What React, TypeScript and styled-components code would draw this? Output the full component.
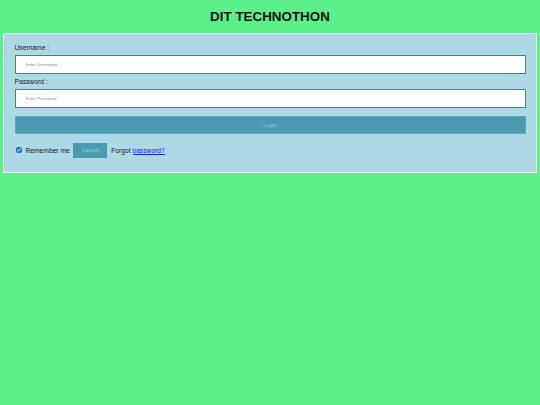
import styled, { createGlobalStyle } from "styled-components";

const GlobalStyle = createGlobalStyle`
  html, body {
    margin: 0;
    padding: 0;
    background: #5cf08b;
    font-family: "Liberation Sans", Arial, sans-serif;
  }
`;

const Page = styled.div`
  min-height: 405px;
  padding: 0 3px;
  box-sizing: border-box;
`;

const Title = styled.h2`
  margin: 8.5px 0 0;
  height: 24.5px;
  font-size: 13.4px;
  line-height: 15.3px;
  font-weight: 700;
  text-align: center;
  color: #111;
`;

const Form = styled.form`
  margin: 0;
  background: #add8e6;
  border: 1.5px solid #e6f3ef;
  padding: 9.5px 10.5px 14.5px;
  box-sizing: border-box;
`;

const Label = styled.label`
  display: block;
  font-size: 6.7px;
  line-height: 8px;
  color: #1a1a1a;
`;

const Field = styled.input`
  display: block;
  width: 100%;
  box-sizing: border-box;
  height: 19px;
  margin: 3.5px 0 3.5px;
  padding: 0 10px;
  border: 1px solid #3d8f4c;
  background: #fff;
  font-family: "Liberation Sans", Arial, sans-serif;
  font-size: 4.4px;
  outline: none;

  &::placeholder {
    color: #8a8a8a;
  }
`;

const Button = styled.button<{ $wide?: boolean }>`
  display: block;
  box-sizing: border-box;
  width: ${(p) => (p.$wide ? "100%" : "34px")};
  height: ${(p) => (p.$wide ? "18.5px" : "15px")};
  margin: 0;
  padding: 0;
  border: 1px solid ${(p) => (p.$wide ? "#5ea9bd" : "#4b9ab0")};
  background: #4b9ab0;
  color: #8ccbdc;
  font-family: "Liberation Sans", Arial, sans-serif;
  font-size: 5.6px;
  cursor: pointer;
`;

const LoginWrap = styled.div`
  margin-top: 7.5px;
`;

const Row = styled.div`
  display: flex;
  align-items: center;
  margin-top: 8.5px;
  padding-left: 1.5px;
  font-size: 6.7px;
  color: #1a1a1a;
`;

const Check = styled.input`
  width: 6px;
  height: 6px;
  margin: 0 3.5px 0 0;
  accent-color: #1a6fe0;
`;

const RememberText = styled.span`
  margin-right: 3.5px;
`;

const Forgot = styled.span`
  margin-left: 4px;
`;

const Link = styled.a`
  color: #1a1aee;
  text-decoration: underline;
`;

export default function App() {
  return (
    <>
      <GlobalStyle />
      <Page>
        <Title>DIT TECHNOTHON</Title>
        <Form onSubmit={(e) => e.preventDefault()}>
          <Label htmlFor="uname">Username :</Label>
          <Field id="uname" type="text" placeholder="Enter Username" />
          <Label htmlFor="psw">Password :</Label>
          <Field id="psw" type="password" placeholder="Enter Password" />
          <LoginWrap>
            <Button $wide type="submit">Login</Button>
          </LoginWrap>
          <Row>
            <Check type="checkbox" defaultChecked />
            <RememberText>Remember me</RememberText>
            <Button type="button">Cancel</Button>
            <Forgot>
              Forgot <Link href="#">password?</Link>
            </Forgot>
          </Row>
        </Form>
      </Page>
    </>
  );
}
